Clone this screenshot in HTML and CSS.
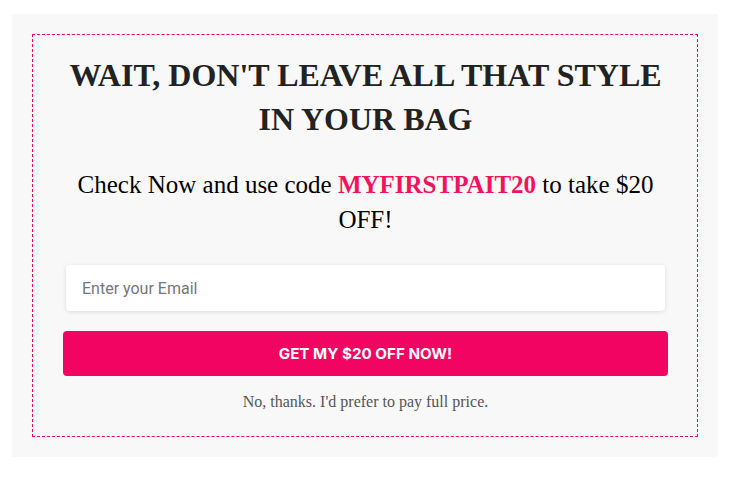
FILE: index.html
```html
<!DOCTYPE html>
<html>
<head>
<meta charset="utf-8">
<link rel="stylesheet" href="styles.css">
</head>
<body>
<div class="page">
  <div class="popup">
    <div class="frame">
      <h1 class="title">WAIT, DON'T LEAVE ALL THAT STYLE IN YOUR BAG</h1>
      <p class="sub">Check Now and use code <strong class="code">MYFIRSTPAIT20</strong> to take $20 OFF!</p>
      <form class="form">
        <input class="email" type="text" placeholder="Enter your Email">
        <button class="cta" type="button">GET MY $20 OFF NOW!</button>
      </form>
      <p class="decline">No, thanks. I'd prefer to pay full price.</p>
    </div>
  </div>
</div>
</body>
</html>
```
FILE: styles.css
```css
html, body {
  margin: 0;
  padding: 0;
  background: #ffffff;
}
.page {
  padding: 14px 13px 20px 12px;
}
.popup {
  width: 706px;
  box-sizing: border-box;
  background: #f8f8f8;
  padding: 20px;
}
.frame {
  border: 1px dashed #f5075f;
  padding: 18px 29px 24px 30px;
  font-family: "Liberation Serif", "Times New Roman", serif;
  text-align: center;
}
.title {
  margin: 0;
  font-size: 32px;
  line-height: 44px;
  font-weight: bold;
  color: #222222;
  padding: 0 4px;
}
.sub {
  margin: 26px 0 0;
  font-size: 25px;
  line-height: 35px;
  color: #000000;
  padding: 0 8px;
}
.code {
  color: #f2125e;
}
.form {
  margin: 28px 0 0;
  display: flex;
  flex-direction: column;
  gap: 20px;
}
.email {
  margin: 0 3px;
  height: 46px;
  box-sizing: border-box;
  border: none;
  border-radius: 4px;
  background: #ffffff;
  box-shadow: 0 1px 4px rgba(0, 0, 0, 0.12);
  padding: 0 16px;
  font-family: Roboto, "Liberation Sans", sans-serif;
  font-size: 16px;
  color: #333;
  outline: none;
}
.email::placeholder {
  color: #767676;
}
.cta {
  height: 45px;
  border: none;
  border-radius: 4px;
  background: #f20562;
  color: #ffffff;
  font-family: Inter, Roboto, "Liberation Sans", sans-serif;
  font-weight: 700;
  font-size: 15.2px;
  letter-spacing: 0;
  cursor: pointer;
}
.decline {
  margin: 16px 0 0;
  font-size: 16px;
  line-height: 20px;
  color: #555555;
}
```
